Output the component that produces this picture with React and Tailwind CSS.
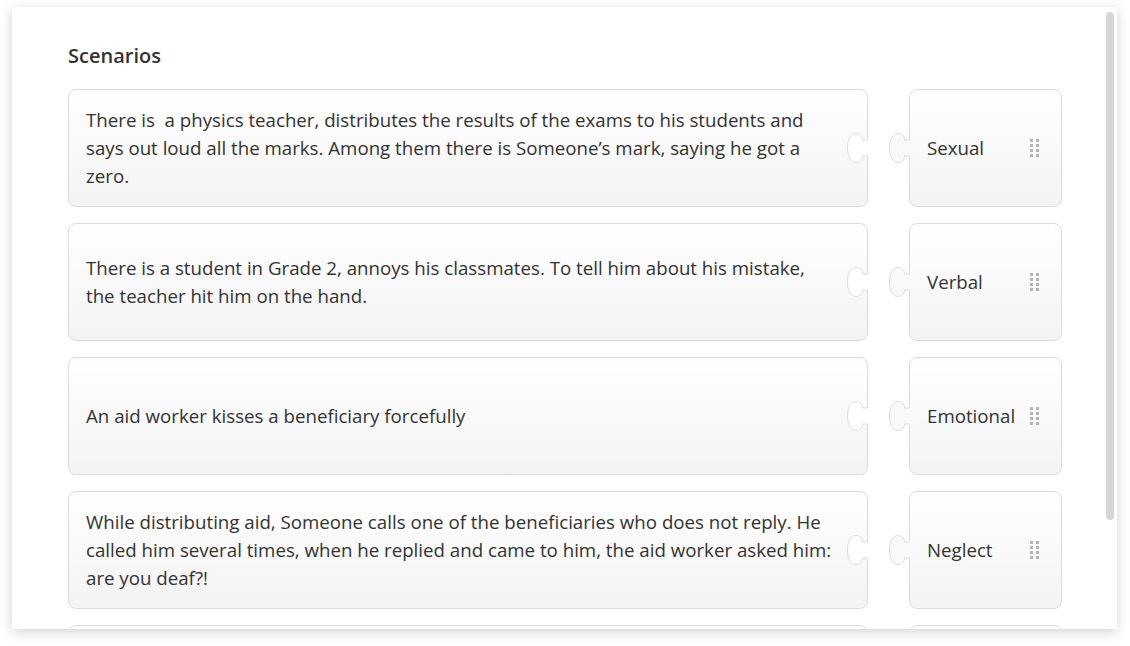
import React from "react";

const scenarios = [
  {
    id: 1,
    text: "There is\u00a0 a physics teacher, distributes the results of the exams to his students and says out loud all the marks. Among them there is Someone’s mark, saying he got a zero.",
    label: "Sexual",
  },
  {
    id: 2,
    text: "There is a student in Grade 2, annoys his classmates. To tell him about his mistake, the teacher hit him on the hand.",
    label: "Verbal",
  },
  { id: 3, text: "An aid worker kisses a beneficiary forcefully", label: "Emotional" },
  {
    id: 4,
    text: "While distributing aid, Someone calls one of the beneficiaries who does not reply. He called him several times, when he replied and came to him, the aid worker asked him: are you deaf?!",
    label: "Neglect",
  },
  { id: 5, text: "", label: "" },
];

// puzzle connector outline, card edge sits at x=21.5
const EDGE =
  "M21.5,8 L16.5,8 C16.5,3.5 13.5,1.5 10,1.5 C4.5,1.5 1.5,7.5 1.5,16 C1.5,24.5 4.5,30.5 10,30.5 C13.5,30.5 16.5,28.5 16.5,24 L21.5,24";

function Connector({ fill, className }) {
  return (
    <svg width="24" height="32" viewBox="0 0 24 32" className={className}>
      <path d={EDGE + " L24,24 L24,8 Z"} fill={fill} />
      <path d={EDGE} fill="none" stroke="#dcdcdc" strokeWidth="1" />
    </svg>
  );
}

function Handle() {
  return (
    <div className="grid grid-cols-2 gap-x-[3px] gap-y-[2px]">
      {[0, 1, 2, 3, 4, 5, 6, 7].map((i) => (
        <span key={i} className="block w-[3px] h-[3px] bg-[#b4b4b4]" />
      ))}
    </div>
  );
}

export default function App() {
  return (
    <div className="min-h-screen bg-white pt-[7px] pl-[12px]" style={{ fontFamily: '"Open Sans", "Liberation Sans", sans-serif' }}>
      <div className="relative w-[1105px] h-[622px] overflow-hidden bg-white shadow-[0_3px_12px_rgba(0,0,0,0.18)]">
        {/* scrollbar thumb */}
        <div className="absolute right-[3px] top-[5px] w-[8px] h-[508px] rounded-full bg-[#d6d6d6]" />

        <div className="pl-[56px] pt-[35px]">
          <h2 className="text-[20px] font-semibold text-[#333] leading-[28px]">Scenarios</h2>

          <div className="mt-[19px] flex flex-col gap-[16px]">
            {scenarios.map((s) => (
              <div key={s.id} className="flex gap-[41px]">
                <div className="relative w-[800px] h-[118px] flex items-center pl-[17px] pr-[34px] rounded-lg border border-[#dcdcdc] bg-linear-to-b from-white to-[#f3f3f3]">
                  <p className="text-[18.7px] leading-[28px] text-[#333]">{s.text}</p>
                  <Connector fill="#ffffff" className="absolute right-[-3px] top-1/2 -translate-y-1/2" />
                </div>
                <div className="relative w-[153px] h-[118px] flex items-center justify-between pl-[17px] pr-[22px] rounded-lg border border-[#dcdcdc] bg-linear-to-b from-white to-[#f3f3f3]">
                  <span className="text-[18.7px] text-[#333]">{s.label}</span>
                  <Handle />
                  <Connector fill="#f9f9f9" className="absolute left-[-22px] top-1/2 -translate-y-1/2" />
                </div>
              </div>
            ))}
          </div>
        </div>
      </div>
    </div>
  );
}
